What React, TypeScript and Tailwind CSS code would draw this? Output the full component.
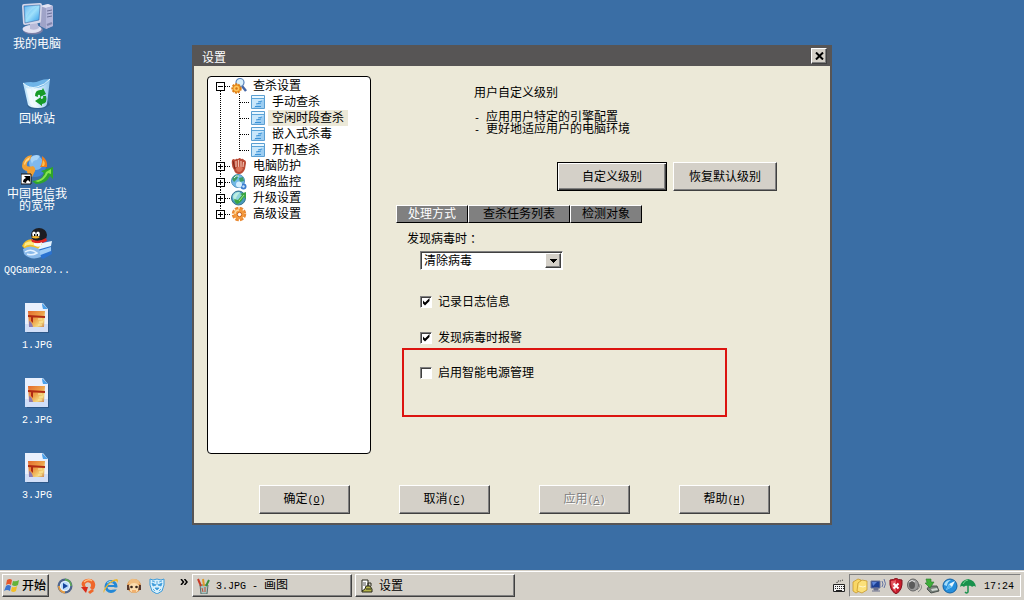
import { useState } from "react";
import clsx from "clsx";

const RAISED =
  "border border-t-white border-l-white border-r-[#404040] border-b-[#404040] bg-[#d4d0c8] shadow-[inset_-1px_-1px_0_#808080]";
const SUNKEN =
  "border border-t-[#808080] border-l-[#808080] border-r-white border-b-white";

// Latin text sits on a 6px grid beside the 12px Chinese characters
function Mono(props: { children: React.ReactNode }) {
  return (
    <span className="font-['Liberation_Mono',monospace] text-[10px]">
      {props.children}
    </span>
  );
}

/* ---------- desktop icons ---------- */

function ComputerIcon() {
  return (
    <svg viewBox="0 0 32 32" className="size-8">
      <defs>
        <linearGradient id="screen" x1="0" y1="0" x2="1" y2="1">
          <stop offset="0" stopColor="#3fa6ee" />
          <stop offset="0.5" stopColor="#9fe0fb" />
          <stop offset="1" stopColor="#2d9ae8" />
        </linearGradient>
      </defs>
      <path d="M19 3l8-2 5 2v20l-7 3-6-3z" fill="#9fa3c8" />
      <path d="M19 3l8-2 5 2-7 2z" fill="#e2e4f4" />
      <path d="M25 5l7-2v20l-7 3z" fill="#b3b6da" />
      <path d="M26 8l5-1M26 11l5-1M26 14l5-1" stroke="#6d7199" />
      <path d="M26 22l5-2" stroke="#8286ad" strokeWidth="2" />
      <ellipse cx="12" cy="27" rx="10" ry="4.5" fill="#7c7fa6" />
      <ellipse cx="11" cy="26" rx="9.5" ry="4" fill="#e0e1f2" />
      <path d="M9 19h7l2 6q-4 3-9 1z" fill="#b9bbd9" />
      <path d="M1 3q0-2 2-2l16-1q2 0 2 2l-1 16q0 2-2 2L4 22q-2 0-2-2z" fill="#d5d7ea" />
      <path d="M3 3l16-1-1 15-14 3z" fill="url(#screen)" stroke="#3c6ca8" strokeWidth="0.6" />
      <path d="M4 4l12-1q-8 5-11 12z" fill="#fff" opacity="0.2" />
    </svg>
  );
}

function RecycleBinIcon() {
  return (
    <svg viewBox="0 0 32 32" className="size-8">
      <defs>
        <linearGradient id="bin">
          <stop offset="0" stopColor="#b4dffa" />
          <stop offset="0.45" stopColor="#f4fcff" />
          <stop offset="1" stopColor="#8fc6ef" />
        </linearGradient>
      </defs>
      <path d="M6 27l2 3q8 2 16 0l5-3-2-4z" fill="#26547f" opacity="0.6" />
      <path d="M2 5q7 4 14 2T29 1l-3 25q-1 4-9 4t-10-3z" fill="url(#bin)" />
      <path d="M2 5q4-1 8-1 4 1 8-1t11-2q-5 8-13 9T2 5z" fill="#6fb4e8" />
      <path d="M2 5q6 6 14 4T29 1" fill="none" stroke="#e9f8ff" />
      <path d="M5 10l4 16 4 3L10 11z" fill="#fff" opacity="0.6" />
      <path
        d="M14 18q0-7 7-6l1-2 3 6-6 3v-2q-3-1-2 2zM25 18q2 7-4 8v2l-7-5 6-4v2q3 0 2-3z"
        fill="#169a28"
      />
    </svg>
  );
}

function BroadbandIcon() {
  return (
    <svg viewBox="0 0 32 32" className="size-8">
      <circle cx="14" cy="13" r="11" fill="#3e83d2" />
      <circle cx="15" cy="10" r="7" fill="#7fb9ee" />
      <path d="M9 5q5-5 10-2l-3 4q-4 0-5 4z" fill="#a8d4f8" />
      <path d="M1 13Q2 3 11 2L9 7q-4 2-3 6 3 1 6 0 4 3 1 7l-2 4q-5-2-5-6Q1 17 1 13z" fill="#f0a034" />
      <path d="M3 11q1-5 6-7l-1 3q-3 1-4 5z" fill="#ffd584" />
      <path d="M21 3q6 4 5 11h-7q3-4 2-11z" fill="#ee7d1b" />
      <path d="M22 7q3 3 1 6h-2z" fill="#ffc24b" />
      <path d="M11 28q10 0 12-8l-3-2 12-4v12l-3-3q-4 8-14 8z" fill="#2fa52b" />
      <path d="M14 28q9-2 11-9l5-3v5l-3-1q-3 7-10 9z" fill="#86e34e" />
      <path d="M0 21h10v10H0z" fill="#fff" stroke="#111" />
      <path d="M3 23h6v6l-2-2q-2 1-2 3l-3-1q0-3 3-4z" fill="#000" />
    </svg>
  );
}

function QQGameIcon() {
  return (
    <svg viewBox="0 0 32 32" className="size-8">
      <path d="M15 14l14-1 2 13-9 5-8-5z" fill="#2a72d0" />
      <path d="M16 16l15-3-1 5-14 4z" fill="#e6f4ff" />
      <path d="M17 23l13-4v4l-13 5z" fill="#9ccbf6" />
      <path d="M1 18q4-9 14-6l6 4-4 5-12 1z" fill="#f0be2c" />
      <path d="M4 15q7-4 13 1l-3 2q-6-3-11 1z" fill="#ffea83" />
      <path d="M2 21q7-5 16 0l2 8q-10 4-17-3z" fill="#89b9ea" />
      <path d="M4 24q6-4 12 1-5 3-10 1" fill="none" stroke="#e4f2ff" strokeWidth="1.5" />
      <ellipse cx="18" cy="7" rx="8" ry="7" fill="#1d1d22" />
      <ellipse cx="13" cy="6" rx="1.8" ry="2.5" fill="#fff" />
      <ellipse cx="17" cy="6" rx="1.8" ry="2.5" fill="#fff" />
      <path d="M13 6h1v2h-1zM16 6h1v2h-1z" />
      <path d="M10 9q4-2 9 0-4 3-9 0z" fill="#f7b72a" />
      <path d="M10 11q7 4 15-1l1 3q-7 4-15 1z" fill="#e02421" />
      <path d="M13 15q5 1 8-1l-1 4q-4 2-7-1z" fill="#f8f8f8" />
    </svg>
  );
}

function JpgIcon(props: { id: string }) {
  return (
    <svg viewBox="0 2 32 32" className="size-8">
      <defs>
        <linearGradient id={props.id} x1="0" y1="0" x2="1" y2="1">
          <stop offset="0" stopColor="#e4692c" />
          <stop offset="0.5" stopColor="#eda44b" />
          <stop offset="0.75" stopColor="#f5d77c" />
          <stop offset="1" stopColor="#c77a49" />
        </linearGradient>
      </defs>
      <path d="M6 4h18l4 5v23H6z" fill="#23456f" opacity="0.55" />
      <path d="M4 2h18l5 6v23H4z" fill="#e9f0fd" />
      <path d="M4 23h23v8H4z" fill="#d2dff8" />
      <path d="M21 2l6 6h-5q-1-3-1-6z" fill="#49a0ea" />
      <path d="M7 10h17l-1 16H8z" fill={`url(#${props.id})`} />
      <path d="M8 20q3 1 4 6H8z" fill="#8e7bb0" />
      <path d="M7 14l17 1v2L7 16zM10 15h2v7l-2-2z" fill="#b02a13" />
      <path d="M17 18h4M18 21h4M17 24h4" stroke="#fae79b" />
    </svg>
  );
}

/* ---------- tree icons ---------- */

function ScanIcon() {
  return (
    <svg viewBox="0 0 16 16" className="size-4">
      <path d="M11 8l4 5" stroke="#4466a6" strokeWidth="2.5" />
      <circle cx="9" cy="4.5" r="4" fill="#d8f0fd" stroke="#5b84bd" strokeWidth="1.2" />
      <circle cx="5.5" cy="10.5" r="4.2" fill="#ee9a25" stroke="#dd7f18" strokeDasharray="2 1" strokeWidth="2" />
      <circle cx="5.5" cy="10.5" r="2.8" fill="#ffc65c" />
      <circle cx="5.5" cy="10.5" r="1.2" fill="#d7761a" />
    </svg>
  );
}

function PageIcon() {
  return (
    <svg viewBox="0 0 16 16" className="size-4">
      <path d="M1.5 1.5h13v13h-13z" fill="#c9e7fb" stroke="#5b9fd2" />
      <path d="M2 2h12v2H2z" fill="#e9f7ff" />
      <path d="M2 4.5h12" stroke="#5ba4d8" />
      <path d="M3 14l11-9v9z" fill="#9bcdf2" />
      <path d="M8 8l4-1M6 10l5-1M5 12.5h6" stroke="#3b93d8" />
    </svg>
  );
}

function GloveIcon() {
  return (
    <svg viewBox="0 0 16 16" className="size-4">
      <path d="M1 2q2-2 3 0 1-2 3-1 2-2 3 0 2-1 3 1 2 0 2 3l-1 6q-2 5-6 5t-5-4Q0 8 1 2z" fill="#b94a35" />
      <path d="M5 3v6M7.5 2v7M10 3v6M12.5 4L12 9" stroke="#f2c0ae" strokeWidth="1.2" />
      <path d="M5 10q4-3 7 0-1 4-4 4t-3-4z" fill="#d97359" />
      <path d="M2 3l2 8" stroke="#7a2519" />
    </svg>
  );
}

function NetworkIcon() {
  return (
    <svg viewBox="0 0 16 16" className="size-4">
      <circle cx="7" cy="7" r="6.5" fill="#70b8e6" stroke="#4a8dbd" />
      <path d="M1 5q3-5 7-4L6 5 3 8zM8 4l4-1 1 4-4 1z" fill="#3d9c63" />
      <path d="M3 4q2-3 5-2" stroke="#e4f7ff" fill="none" />
      <circle cx="12.5" cy="12.5" r="3" fill="#3d7dcf" />
      <circle cx="8" cy="10.5" r="3" fill="#d5efff" />
      <circle cx="12.5" cy="12.5" r="1.2" fill="#c5e3fb" />
    </svg>
  );
}

function UpdateIcon() {
  return (
    <svg viewBox="0 0 16 16" className="size-4">
      <circle cx="7.5" cy="8" r="7" fill="#4899bd" stroke="#37718e" />
      <circle cx="6.5" cy="7" r="5" fill="#8fd3dd" />
      <path d="M2 7q2-5 7-5L6 6l-2 4z" fill="#bfeee0" />
      <path d="M3 9l4 1 4-5-2-1 6-2v7l-2-2q-3 6-7 7-3-2-3-6z" fill="#3ba544" />
      <path d="M8 11l5-6" stroke="#a5e886" />
    </svg>
  );
}

function GearIcon() {
  return (
    <svg viewBox="0 0 16 16" className="size-4">
      <circle cx="8" cy="8" r="5.5" fill="none" stroke="#ea8b35" strokeWidth="3.5" strokeDasharray="3.2 1.1" />
      <circle cx="8" cy="8" r="5.2" fill="#f49a3d" />
      <path d="M4 8q0-4 4-4" fill="none" stroke="#ffd79b" strokeWidth="1.5" />
      <circle cx="8.5" cy="8.5" r="2.2" fill="#fff" stroke="#c65d17" />
    </svg>
  );
}

/* ---------- taskbar icons ---------- */

function WindowsIcon() {
  return (
    <svg viewBox="0 0 16 16" className="size-4">
      <path d="M3 2q3-2 5 0L7 7Q5 5 2 7z" fill="#e4572c" />
      <path d="M9 3q3 1 6-1l-1 5q-3 2-6 0z" fill="#64b33a" />
      <path d="M2 8q2-2 5 0l-1 5q-3-2-6 0z" fill="#3c75cf" />
      <path d="M8 9q3 1 5-1l-1 5q-3 2-5 0z" fill="#f3be25" />
    </svg>
  );
}

function PlayerIcon() {
  return (
    <svg viewBox="0 0 16 16" className="size-4">
      <circle cx="8" cy="8" r="7.5" fill="#4d648d" />
      <path d="M8 .5A7.500 7.500 0 0 1 15 8h-3a4 4 0 0 0-4-4z" fill="#5fa65a" />
      <path d="M8 15.500A7.500 7.500 0 0 1 1 8h3a4 4 0 0 0 4 4z" fill="#e19b46" />
      <circle cx="8" cy="8" r="5.2" fill="#e8f3ff" />
      <circle cx="8" cy="8" r="4.2" fill="#bcdcfa" />
      <path d="M6 5l5 3-5 3z" fill="#13449c" />
    </svg>
  );
}

function SwirlIcon() {
  return (
    <svg viewBox="0 0 16 16" className="size-4">
      <path d="M4 10Q-1 6 4 2q6-3 10 1 3 5-1 9l-3-2q2-3 0-5-3-2-5 1 0 2 1 3z" fill="#ef672b" />
      <path d="M4 4q4-4 8-1" stroke="#ffbd7d" fill="none" strokeWidth="1.5" />
      <path d="M1 9h7l-2 6z" fill="#d92b1a" />
      <path d="M12 11l2 2-4 3-2-2z" fill="#ef672b" />
    </svg>
  );
}

function ExplorerIcon() {
  return (
    <svg viewBox="0 0 16 16" className="size-4">
      <circle cx="8" cy="8.5" r="5" fill="none" stroke="#2388d6" strokeWidth="3" />
      <path d="M4 8h9" stroke="#2388d6" strokeWidth="2" />
      <path d="M10 9.500h6v2h-6z" fill="#d4d0c8" />
      <path d="M4 5q3-3 6-1" stroke="#96d7fb" fill="none" />
      <path d="M1 15q-2-2 3-8 5-6 10-6 2 1 0 4 0-3-2-2-5 1-8 6-3 4-3 6z" fill="#efb82d" />
    </svg>
  );
}

function HeadsetIcon() {
  return (
    <svg viewBox="0 0 16 16" className="size-4">
      <circle cx="8" cy="8" r="7" fill="#d88b3c" />
      <path d="M2 6q2-6 6-5 5 0 6 5z" fill="#efbd80" />
      <path d="M1 7h14v5H1z" fill="#573729" />
      <path d="M3 7q5-4 10 0l-1 6q-4 3-8 0z" fill="#fbdcae" />
      <circle cx="5.5" cy="9" r="1.3" fill="#36251c" />
      <circle cx="10.5" cy="9" r="1.3" fill="#36251c" />
      <path d="M6 13h4" stroke="#e8832c" />
    </svg>
  );
}

function LionIcon() {
  return (
    <svg viewBox="0 0 16 16" className="size-4">
      <path d="M1 1l3 1q4-2 8 0l3-1v6l-2 6-5 3-5-3-2-6z" fill="#d6effc" stroke="#3d9bd9" />
      <path
        d="M3 5l4 2-3 1zM13 5L9 7l3 1zM6 10h4l-2 2zM4 11l2 2M12 11l-2 2M8 3v4M3 3l3 1M13 3l-3 1"
        fill="#3d9bd9"
        stroke="#3d9bd9"
        strokeWidth="0.8"
      />
    </svg>
  );
}

function PaintIcon() {
  return (
    <svg viewBox="0 0 16 16" className="size-4">
      <path d="M4 7h8l-1 9H5z" fill="#a9c4c0" stroke="#5b6f6c" />
      <path d="M5 8L2 1" stroke="#c73b27" strokeWidth="2" />
      <path d="M8 8L7 1" stroke="#df9a2b" strokeWidth="2" />
      <path d="M10 8l3-6" stroke="#3a8d39" strokeWidth="2" />
      <path d="M6 10l1 4M9 9v5" stroke="#c94b33" />
    </svg>
  );
}

function AppIcon() {
  return (
    <svg viewBox="0 0 16 16" className="size-4">
      <path d="M3 2h6v11H3z" fill="#fff" stroke="#28281a" />
      <path d="M4 5h3M4 7h3" stroke="#555" />
      <path d="M3 13l3-2 1-3h4l2 3v3H3z" fill="#b5b54a" stroke="#28281a" />
      <path d="M9 8V5h3v3M7 11h5" fill="none" stroke="#28281a" />
    </svg>
  );
}

function KeyboardIcon() {
  return (
    <svg viewBox="0 0 14 14" className="size-3.5">
      <path d="M5 4q0-2 2-2t4-1" fill="none" stroke="#222" strokeDasharray="1 1" />
      <path d="M1.500 5.500h11v7h-11z" fill="#f4f4f4" stroke="#222" />
      <path d="M3 7.500h9M3 9.500h9" stroke="#222" strokeDasharray="1 1" />
      <path d="M4 11.500h6" stroke="#222" />
    </svg>
  );
}

function FolderIcon() {
  return (
    <svg viewBox="0 0 16 16" className="size-4">
      <path d="M1 4l5-3 3 1v10l-5 3-3-2z" fill="#f9d766" stroke="#c1901f" strokeWidth="0.7" />
      <path d="M6 5l4-3 5 1v9l-5 3-5-2z" fill="#fbe07a" stroke="#c1901f" strokeWidth="0.7" />
      <path d="M7 8l4 1 3-1" stroke="#fff6c8" fill="none" />
    </svg>
  );
}

function WirelessIcon() {
  return (
    <svg viewBox="0 0 16 16" className="size-4">
      <path d="M1 3h9v7H1z" fill="#1c3f94" stroke="#6b7597" />
      <path d="M2 4h5l-4 4z" fill="#5a83d8" />
      <path d="M4 10h4v2H4zM2 13h8" fill="#6a708e" stroke="#6a708e" />
      <path d="M12 3q2 3 0 6M14 1q3 5 0 9" fill="none" stroke="#6475a4" />
    </svg>
  );
}

function ShieldIcon() {
  return (
    <svg viewBox="0 0 16 16" className="size-4">
      <path d="M2 2q4 0 6-2 2 2 6 2 1 10-6 14Q1 12 2 2z" fill="#c81d2c" stroke="#7f1420" />
      <path d="M3 3q3 0 5-1v12Q3 11 3 3z" fill="#e35a62" />
      <path d="M5.500 5.500l5 5M10.500 5.500l-5 5" stroke="#fff" strokeWidth="2" />
    </svg>
  );
}

function SpeakerIcon() {
  return (
    <svg viewBox="0 0 16 16" className="size-4">
      <ellipse cx="7" cy="7" rx="5.5" ry="6" fill="#9b9b9b" stroke="#666" />
      <ellipse cx="6" cy="7" rx="3" ry="4" fill="#5b5b5b" />
      <path d="M3 4q3-3 6 0" stroke="#e4e4e4" fill="none" />
      <path d="M11 12q3-2 3-6M12 14q4-2 4-7" fill="none" stroke="#888" />
    </svg>
  );
}

function UsbIcon() {
  return (
    <svg viewBox="0 0 16 16" className="size-4">
      <path d="M5 8h8l2 5-8 2-4-4z" fill="#77807a" stroke="#4b524e" />
      <path d="M7 11l6-1 1 2-6 1z" fill="#cfd6d1" />
      <path d="M2 1h5v3h3l-4 6-5-5h2z" fill="#3fae3a" stroke="#23782a" strokeWidth="0.6" />
    </svg>
  );
}

function CompassIcon() {
  return (
    <svg viewBox="0 0 16 16" className="size-4">
      <circle cx="8" cy="8" r="7" fill="#258fdd" stroke="#1262a4" />
      <path d="M2 7q1-5 7-5-4 2-4 6z" fill="#a6ddfa" />
      <path d="M4 12l3-6 6-3-3 6z" fill="#e7f7ff" />
      <path d="M7 6l3 3-6 3z" fill="#55b5ef" />
    </svg>
  );
}

function UmbrellaIcon() {
  return (
    <svg viewBox="0 0 16 16" className="size-4">
      <path d="M0 9q1-7 8-8 7 1 8 8-2-2-4 0-1-2-4-1-3-1-4 1-2-2-4 0z" fill="#18914c" />
      <path d="M3 6q2-4 5-4" stroke="#6ccf8b" fill="none" />
      <path d="M8 8v6q-1 2-3 0" stroke="#18914c" fill="none" strokeWidth="1.5" />
    </svg>
  );
}

/* ---------- controls ---------- */

function PushButton(props: {
  children: React.ReactNode;
  className?: string;
  primary?: boolean;
  disabled?: boolean;
}) {
  return (
    <button
      type="button"
      disabled={props.disabled}
      className={clsx(
        "text-center text-black disabled:text-[#808080] disabled:[text-shadow:1px_1px_0_#fff]",
        props.primary
          ? "h-[29px] border border-black bg-[#d4d0c8] shadow-[inset_1px_1px_0_#fff,inset_-1px_-1px_0_#404040,inset_-2px_-2px_0_#808080]"
          : clsx("h-[29px]", RAISED),
        props.className,
      )}
    >
      {props.children}
    </button>
  );
}

function Shortcut(props: { letter: string }) {
  return (
    <Mono>
      (<span className="underline">{props.letter}</span>)
    </Mono>
  );
}

function CheckField(props: { label: string; checked?: boolean }) {
  return (
    <label className="flex items-center gap-1.5">
      <span className="grid size-3">
        <input
          type="checkbox"
          defaultChecked={props.checked}
          className="peer col-start-1 row-start-1 size-3 appearance-none border border-t-[#808080] border-r-white border-b-white border-l-[#808080] bg-white shadow-[inset_1px_1px_0_#404040]"
        />
        <svg
          viewBox="0 0 12 12"
          className="pointer-events-none invisible col-start-1 row-start-1 size-3 peer-checked:visible"
        >
          <path d="M3 4.500v3l2 2 4.500-4.500V2L5 6.500z" fill="#000" />
        </svg>
      </span>
      {props.label}
    </label>
  );
}

const tree = [
  {
    label: "查杀设置",
    icon: <ScanIcon />,
    children: ["手动查杀", "空闲时段查杀", "嵌入式杀毒", "开机查杀"],
  },
  { label: "电脑防护", icon: <GloveIcon />, children: [] },
  { label: "网络监控", icon: <NetworkIcon />, children: [] },
  { label: "升级设置", icon: <UpdateIcon />, children: [] },
  { label: "高级设置", icon: <GearIcon />, children: [] },
];

function SettingsTree() {
  const [open, setOpen] = useState(true);
  const [selected, setSelected] = useState("空闲时段查杀");

  return (
    <ul className="w-[164px] shrink-0 rounded-[4px] border border-black bg-white pt-px">
      {tree.map((node, i) => {
        const expanded = open && node.children.length > 0;
        return (
          <li key={node.label}>
            <div className="flex h-4 items-center">
              <button
                type="button"
                aria-label={node.label}
                onClick={() => i === 0 && setOpen(!open)}
              >
                <svg viewBox="0 0 23 16" className="h-4 w-[23px]" shapeRendering="crispEdges">
                  <path
                    d={clsx(
                      i > 0 && "M12.500 0v4",
                      i < tree.length - 1 && "M12.500 13v3",
                      "M17 8.500h6",
                    )}
                    stroke="#000"
                    strokeDasharray="1 1"
                  />
                  <path d="M8.500 4.500h8v8h-8z" fill="#fff" stroke="#000" />
                  <path d="M10 8.500h5" stroke="#000" />
                  {expanded ? null : <path d="M12.500 6v5" stroke="#000" />}
                </svg>
              </button>
              {node.icon}
              <span className="pl-1.5">{node.label}</span>
            </div>
            {expanded ? (
              <ul>
                {node.children.map((child, j) => (
                  <li key={child} className="flex h-4 items-center">
                    <svg viewBox="0 0 42 16" className="h-4 w-[42px]" shapeRendering="crispEdges">
                      <path
                        d={clsx(
                          "M12.500 0v16M32 8.500h10",
                          j < node.children.length - 1 ? "M31.500 0v16" : "M31.500 0v9",
                        )}
                        stroke="#000"
                        strokeDasharray="1 1"
                      />
                    </svg>
                    <PageIcon />
                    <button
                      type="button"
                      onClick={() => setSelected(child)}
                      className={clsx(
                        "ml-0.5 h-4 px-1",
                        child === selected && "bg-[#ece9d8]",
                      )}
                    >
                      {child}
                    </button>
                  </li>
                ))}
              </ul>
            ) : null}
          </li>
        );
      })}
    </ul>
  );
}

const tabs = [
  { label: "处理方式", className: "w-[72px]" },
  { label: "查杀任务列表", className: "w-[102px]" },
  { label: "检测对象", className: "w-[72px]" },
];

function SettingsPane() {
  const [tab, setTab] = useState(0);

  return (
    <div className="flex-1 pt-[11px] pb-[37px]">
      <div className="pl-[78px]">
        <h2>用户自定义级别</h2>
        <ul className="mt-3">
          {["应用用户特定的引擎配置", "更好地适应用户的电脑环境"].map((text) => (
            <li key={text} className="flex h-3">
              <span className="w-3">
                <Mono>-</Mono>
              </span>
              {text}
            </li>
          ))}
        </ul>
      </div>
      <div className="mt-[27px] flex gap-1.5 pl-[161px]">
        <PushButton primary className="w-[110px]">
          自定义级别
        </PushButton>
        <PushButton className="w-[104px]">恢复默认级别</PushButton>
      </div>
      <div role="tablist" className="mt-3.5 flex">
        {tabs.map((t, i) => (
          <button
            key={t.label}
            type="button"
            role="tab"
            aria-selected={i === tab}
            onClick={() => setTab(i)}
            className={clsx(
              "h-[18px] border border-t-white border-r-black border-b-black border-l-white bg-[#808080]",
              i === tab ? "text-white" : "text-black",
              t.className,
            )}
          >
            {t.label}
          </button>
        ))}
      </div>
      <div className="pt-2.5 pl-[11px]">
        <label htmlFor="virus-action" className="flex h-3">
          发现病毒时
          <span className="font-['Noto_Sans_CJK_TC',sans-serif]">：</span>
        </label>
        <div className="mt-1.5 ml-[13px] flex w-[143px] border border-t-[#808080] border-r-white border-b-white border-l-[#808080] bg-white shadow-[inset_1px_1px_0_#404040]">
          <select
            id="virus-action"
            className="h-[17px] flex-1 appearance-none pt-px pl-[3px] leading-4 outline-none"
          >
            <option>清除病毒</option>
          </select>
          <span className={clsx("my-px mr-px flex w-4 items-center justify-center", RAISED)}>
            <svg viewBox="0 0 7 4" className="h-1 w-[7px]" shapeRendering="crispEdges">
              <path d="M0 0h7v1H0zM1 1h5v1H1zM2 2h3v1H2zM3 3h1v1H3z" />
            </svg>
          </span>
        </div>
      </div>
      <div className="mt-6.5 flex flex-col gap-6 pl-6">
        <CheckField label="记录日志信息" checked />
        <CheckField label="发现病毒时报警" checked />
      </div>
      <div className="mt-1 ml-1.5 h-[69px] w-[325px] border-2 border-[#dc1410] pt-[17px] pl-4">
        <CheckField label="启用智能电源管理" />
      </div>
    </div>
  );
}

function SettingsDialog() {
  return (
    <section
      aria-label="设置"
      className="absolute top-[45px] left-[192px] flex w-[640px] flex-col border-2 border-t-0 border-[#575555] bg-[#ece9d8]"
    >
      <header className="flex h-[21px] items-center justify-between bg-[#575555] pr-[3px] pl-2">
        <h1 className="pt-1 text-white">设置</h1>
        <button
          type="button"
          aria-label="关闭"
          className={clsx("flex size-4 items-center justify-center", RAISED)}
        >
          <svg viewBox="0 0 9 8" className="h-2 w-[9px]">
            <path d="M1 0.500l7 7M8 0.500l-7 7" stroke="#000" strokeWidth="2" />
          </svg>
        </button>
      </header>
      <div className="flex gap-[25px] pt-2.5 pl-[13px]">
        <SettingsTree />
        <SettingsPane />
      </div>
      <footer className="mt-[31px] flex gap-[49px] pb-[9px] pl-[65px]">
        <PushButton className="w-[91px]">
          确定
          <Shortcut letter="O" />
        </PushButton>
        <PushButton className="w-[91px]">
          取消
          <Shortcut letter="C" />
        </PushButton>
        <PushButton disabled className="w-[91px]">
          应用
          <Shortcut letter="A" />
        </PushButton>
        <PushButton className="w-[91px]">
          帮助
          <Shortcut letter="H" />
        </PushButton>
      </footer>
    </section>
  );
}

const shortcuts = [
  { icon: <ComputerIcon />, label: "我的电脑" },
  { icon: <RecycleBinIcon />, label: "回收站" },
  { icon: <BroadbandIcon />, label: "中国电信我的宽带" },
  { icon: <QQGameIcon />, label: <Mono>QQGame20...</Mono> },
  { icon: <JpgIcon id="jpg1" />, label: <Mono>1.JPG</Mono> },
  { icon: <JpgIcon id="jpg2" />, label: <Mono>2.JPG</Mono> },
  { icon: <JpgIcon id="jpg3" />, label: <Mono>3.JPG</Mono> },
];

function Desktop() {
  return (
    <main className="relative flex-1">
      <ul className="w-[74px]">
        {shortcuts.map((item, i) => (
          <li key={i} className="h-[75px] pt-[3px]">
            <button type="button" className="flex w-full flex-col items-center gap-[3px] text-white">
              {item.icon}
              <span className="w-[68px] text-center">{item.label}</span>
            </button>
          </li>
        ))}
      </ul>
      <SettingsDialog />
    </main>
  );
}

function Taskbar() {
  return (
    <footer className="flex h-[30px] items-center border-t border-[#d4d0c8] bg-[#d4d0c8] pr-[3px] pl-0.5 shadow-[inset_0_1px_0_#fff]">
      <button type="button" className={clsx("flex h-[23px] w-[47px] items-center gap-0.5 pl-px", RAISED)}>
        <WindowsIcon />
        <span className="font-medium whitespace-nowrap">开始</span>
      </button>
      <div className="ml-2 flex w-[135px] items-center gap-[7px]">
        <PlayerIcon />
        <SwirlIcon />
        <ExplorerIcon />
        <HeadsetIcon />
        <LionIcon />
        <svg viewBox="0 0 8 6" className="mr-1 mb-2 ml-auto h-1.5 w-2">
          <path d="M1 0l2.500 3L1 6M4.500 0L7 3 4.500 6" fill="none" stroke="#000" strokeWidth="1.5" />
        </svg>
      </div>
      <button type="button" className={clsx("flex h-[23px] w-40 items-center gap-1 pl-[3px]", RAISED)}>
        <PaintIcon />
        <span>
          <Mono>3.JPG - </Mono>画图
        </span>
      </button>
      <button type="button" className={clsx("ml-[3px] flex h-[23px] w-40 items-center gap-1 pl-[3px]", RAISED)}>
        <AppIcon />
        设置
      </button>
      <div className="ml-auto flex items-center gap-[3px]">
        <KeyboardIcon />
        <div className={clsx("flex h-[23px] items-center gap-0.5 pr-1.5 pl-0.5", SUNKEN)}>
          <FolderIcon />
          <WirelessIcon />
          <ShieldIcon />
          <SpeakerIcon />
          <UsbIcon />
          <CompassIcon />
          <UmbrellaIcon />
          <time className="pl-1.5">
            <Mono>17:24</Mono>
          </time>
        </div>
      </div>
    </footer>
  );
}

export default function App() {
  return (
    <div className="flex min-h-screen flex-col bg-[#3a6ea5] font-['Liberation_Sans','Noto_Sans_CJK_SC',sans-serif] text-[12px] leading-3 text-black">
      <Desktop />
      <Taskbar />
    </div>
  );
}
